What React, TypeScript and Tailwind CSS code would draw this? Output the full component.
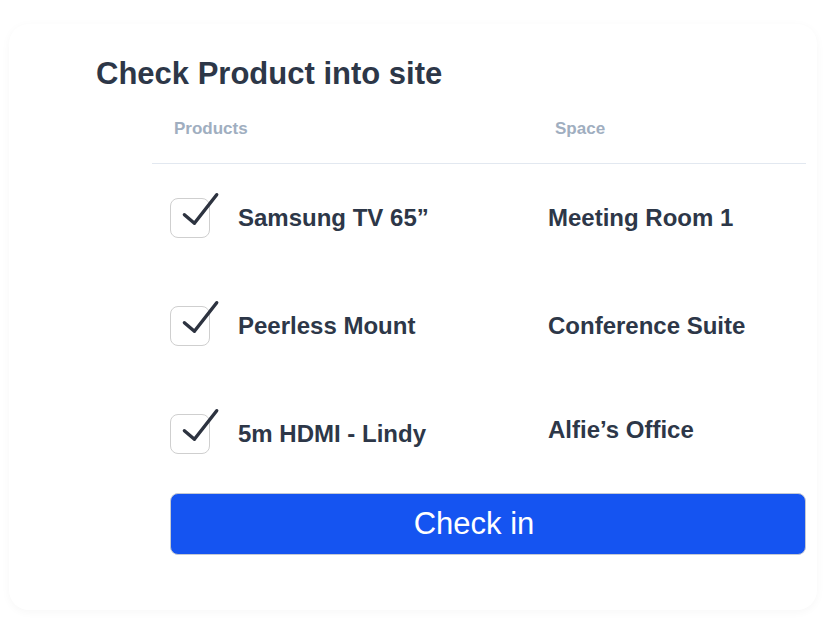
import React from "react";

interface Item {
  product: string;
  space: string;
  lift?: boolean;
}

const items: Item[] = [
  { product: "Samsung TV 65”", space: "Meeting Room 1" },
  { product: "Peerless Mount", space: "Conference Suite" },
  { product: "5m HDMI - Lindy", space: "Alfie’s Office", lift: true },
];

function CheckBox() {
  return (
    <div className="relative w-[40px] h-[40px] shrink-0 rounded-[8px] border border-[#cfcfcf] bg-white">
      <svg
        className="absolute left-0 top-[-10px] overflow-visible"
        width="50"
        height="50"
        viewBox="0 0 50 50"
        fill="none"
      >
        <path
          d="M13.4 25.7 L23.4 34.3 L45.7 5.7"
          stroke="#2d3340"
          strokeWidth="3.4"
          strokeLinecap="round"
          strokeLinejoin="round"
        />
      </svg>
    </div>
  );
}

export default function App() {
  return (
    <div className="w-full h-[628px] bg-white pt-[24px] pl-[9px] pr-[18px] font-['Liberation_Sans',Arial,sans-serif]">
      <div className="h-[586px] rounded-[20px] bg-white shadow-[0_2px_10px_rgba(0,0,0,0.035)] pt-[32px] pl-[87px] pr-[11px]">
        <h1 className="text-[31px] leading-[36px] font-bold text-[#2d3748]">
          Check Product into site
        </h1>

        <div className="ml-[56px] mt-[25px]">
          <div className="flex pl-[22px] pb-[22px] border-b border-[#e2e8f0] text-[17px] leading-[24px] font-bold text-[#a0aec0]">
            <div className="w-[381px]">Products</div>
            <div>Space</div>
          </div>

          {items.map((item) => (
            <div key={item.product} className="flex items-center h-[108px] pl-[18px]">
              <div className="flex items-center gap-[28px] w-[378px]">
                <CheckBox />
                <span className="text-[24px] leading-[30px] font-bold text-[#2d3748]">
                  {item.product}
                </span>
              </div>
              <span
                className={
                  "text-[24px] leading-[30px] font-bold text-[#2d3748] " +
                  (item.lift ? "mb-[9px]" : "")
                }
              >
                {item.space}
              </span>
            </div>
          ))}

          <button className="mt-[5px] ml-[18px] w-[636px] h-[62px] pr-[28px] rounded-[8px] border border-[#c4c9d4] bg-[#1554f1] text-white text-[31px] leading-[36px]">
            Check in
          </button>
        </div>
      </div>
    </div>
  );
}
